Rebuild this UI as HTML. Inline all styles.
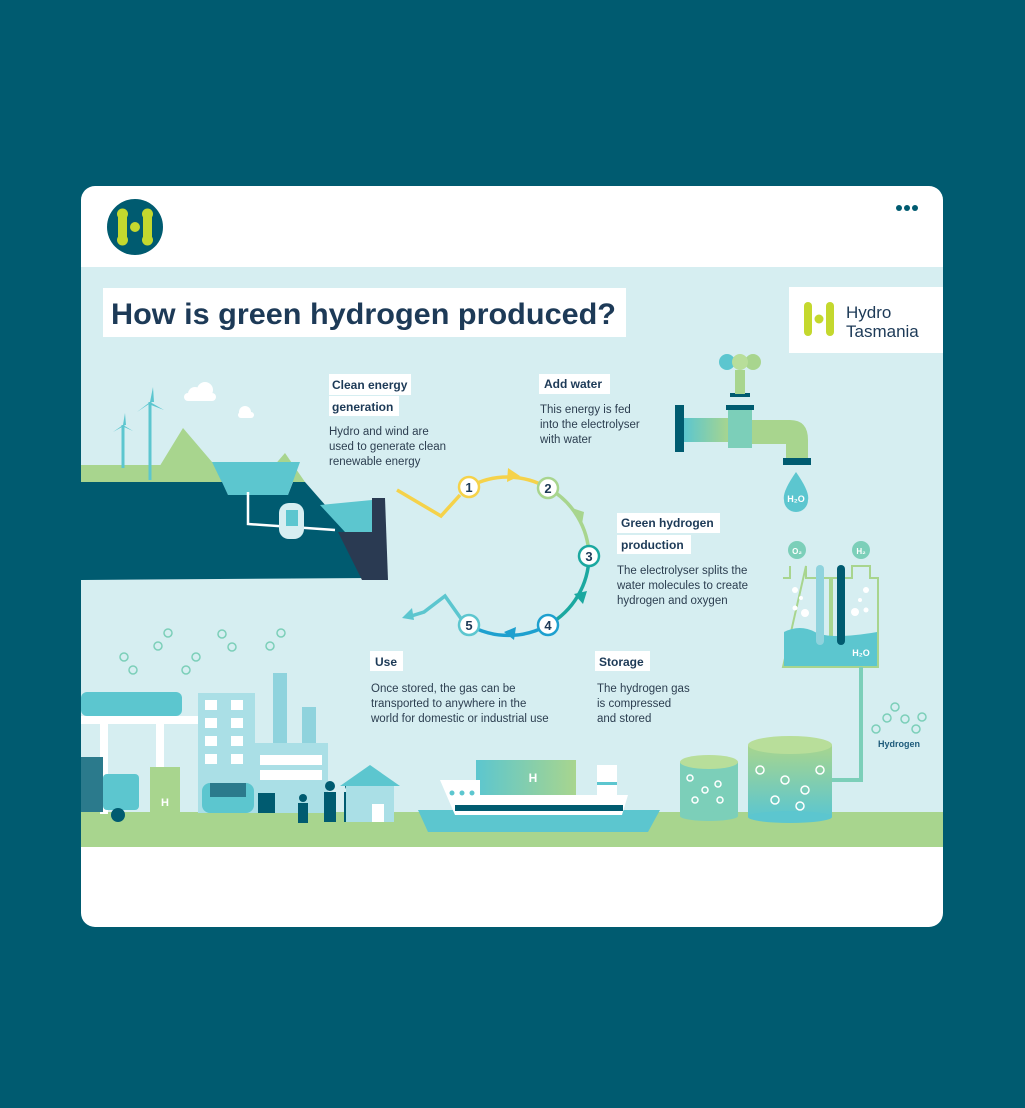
<!DOCTYPE html>
<html><head><meta charset="utf-8"><style>
*{margin:0;padding:0}
body{width:1025px;height:1108px;background:#005b70;position:relative;overflow:hidden;font-family:"Liberation Sans",sans-serif}
.card{position:absolute;left:81px;top:186px;width:862px;height:741px;background:#fff;border-radius:14px;overflow:hidden}
svg{position:absolute;left:0;top:0}
</style></head><body>
<div class="card"></div>
<svg width="1025" height="1108" viewBox="0 0 1025 1108">
<defs>
<linearGradient id="tg" x1="0" x2="1"><stop offset="0" stop-color="#5cc6cf"/><stop offset="1" stop-color="#a8d58e"/></linearGradient>
<linearGradient id="tv" x1="0" y1="0" x2="0" y2="1"><stop offset="0" stop-color="#a8d58e"/><stop offset="1" stop-color="#5cc6cf"/></linearGradient>
<clipPath id="cc"><rect x="81" y="186" width="862" height="741" rx="14"/></clipPath>
</defs>
<g clip-path="url(#cc)">
<rect x="81" y="267" width="862" height="580" fill="#d6eef1"/>
<!-- header logo -->
<circle cx="135" cy="227" r="28" fill="#005b70"/>
<g fill="#c4d82e">
<rect x="118" y="210" width="9" height="34" rx="4.5"/><rect x="143" y="210" width="9" height="34" rx="4.5"/>
<circle cx="122.5" cy="214" r="5.5"/><circle cx="147.5" cy="214" r="5.5"/><circle cx="122.5" cy="240" r="5.5"/><circle cx="147.5" cy="240" r="5.5"/>
<circle cx="135" cy="227" r="5"/></g>
<g fill="#005b70"><circle cx="899" cy="208" r="3"/><circle cx="907" cy="208" r="3"/><circle cx="915" cy="208" r="3"/></g>
<!-- title -->
<rect x="103" y="288" width="523" height="49" fill="#fff"/>
<text x="111" y="324" font-size="30" font-weight="bold" fill="#1d3a57" textLength="505" lengthAdjust="spacingAndGlyphs">How is green hydrogen produced?</text>
<rect x="789" y="287" width="154" height="66" fill="#fff"/>
<g fill="#c4d82e"><rect x="804" y="302" width="8" height="34" rx="4"/><rect x="826" y="302" width="8" height="34" rx="4"/><circle cx="819" cy="319" r="4.5"/></g>
<text x="846" y="318" font-size="17" fill="#1d3a57">Hydro</text>
<text x="846" y="337" font-size="17" fill="#1d3a57">Tasmania</text>
<!-- left landscape -->
<rect x="81" y="465" width="160" height="17" fill="#a8d58e"/>
<path d="M150 482 L183 428 L212 462 L230 482Z" fill="#a8d58e"/>
<path d="M260 482 L285 453 L305 482Z" fill="#a8d58e"/>
<path d="M212 462 L300 462 L288 495 L228 495Z" fill="#5cc6cf"/>
<path d="M81 482 L222 482 L228 495 L288 495 L293 482 L305 482 L340 522 L372 500 L372 578 L81 580Z" fill="#005b70"/>
<path d="M320 505 L372 500 L372 532 L345 532Z" fill="#5cc6cf"/>
<path d="M338 532 L372 532 L372 580 L362 580Z" fill="#2a3a52"/>
<path d="M372 498 L385 498 L388 580 L372 580Z" fill="#2a3a52"/>
<path d="M248 492 L248 524 L335 530" stroke="#fff" stroke-width="2.5" fill="none"/>
<rect x="279" y="503" width="25" height="36" rx="10" fill="#d6eef1"/>
<rect x="286" y="510" width="12" height="16" fill="#5cc6cf"/>
<g stroke="#5cc6cf" stroke-width="3" fill="none"><line x1="123" y1="468" x2="123" y2="425"/><line x1="150" y1="480" x2="150" y2="402"/></g>
<g fill="#5cc6cf"><path d="M150 402 l3 -15 l1 15z"/><path d="M150 402 l-13 10 l12 -8z"/><path d="M150 402 l14 8 l-13 -5z"/><path d="M123 425 l2 -12 l1 12z"/><path d="M123 425 l-10 7 l9 -5z"/><path d="M123 425 l10 6 l-9 -4z"/></g>
<g fill="#fff"><circle cx="195" cy="394" r="7"/><circle cx="205" cy="390" r="8"/><rect x="184" y="393" width="32" height="8" rx="4"/><circle cx="245" cy="412" r="6"/><rect x="238" y="412" width="16" height="6" rx="3"/></g>
<!-- labels -->
<g font-size="12" fill="#1d3a57" font-weight="bold">
<rect x="329" y="374" width="82" height="21" fill="#fff"/><text x="332" y="389">Clean energy</text>
<rect x="329" y="396" width="70" height="20" fill="#fff"/><text x="332" y="411">generation</text>
<rect x="539" y="374" width="71" height="20" fill="#fff"/><text x="544" y="388">Add water</text>
<rect x="617" y="513" width="103" height="20" fill="#fff"/><text x="621" y="527">Green hydrogen</text>
<rect x="617" y="535" width="74" height="19" fill="#fff"/><text x="621" y="549">production</text>
<rect x="370" y="651" width="33" height="20" fill="#fff"/><text x="375" y="666">Use</text>
<rect x="595" y="651" width="55" height="20" fill="#fff"/><text x="599" y="666">Storage</text>
</g>
<g font-size="11.5" fill="#2c3e50">
<text x="329" y="435">Hydro and wind are</text><text x="329" y="450">used to generate clean</text><text x="329" y="465">renewable energy</text>
<text x="540" y="413">This energy is fed</text><text x="540" y="428">into the electrolyser</text><text x="540" y="443">with water</text>
<text x="617" y="574">The electrolyser splits the</text><text x="617" y="589">water molecules to create</text><text x="617" y="604">hydrogen and oxygen</text>
<text x="371" y="692">Once stored, the gas can be</text><text x="371" y="707">transported to anywhere in the</text><text x="371" y="722">world for domestic or industrial use</text>
<text x="597" y="692">The hydrogen gas</text><text x="597" y="707">is compressed</text><text x="597" y="722">and stored</text>
</g>
<!-- cycle -->
<path d="M397 490 L441 516 L460 495" stroke="#f5d24a" stroke-width="3.5" fill="none"/>
<path d="M469 487 A80 80 0 0 1 548 488" stroke="#f5d24a" stroke-width="3.5" fill="none"/>
<path d="M508 468 l12 8 l-13 6z" fill="#f5d24a"/>
<path d="M548 488 A80 80 0 0 1 589 556" stroke="#a8d58e" stroke-width="3.5" fill="none"/>
<path d="M572 508 l12 4 l-2 12z" fill="#a8d58e"/>
<path d="M589 556 A80 80 0 0 1 548 625" stroke="#1ba8a0" stroke-width="3.5" fill="none"/>
<path d="M574 594 l13 -3 l-4 13z" fill="#1ba8a0"/>
<path d="M548 625 A80 80 0 0 1 469 625" stroke="#1ea0cf" stroke-width="3.5" fill="none"/>
<path d="M516 627 l-12 5 l10 8z" fill="#1ea0cf"/>
<path d="M462 620 L445 596 L424 612 L408 617" stroke="#5cc6cf" stroke-width="3.5" fill="none"/>
<path d="M402 618 l10 -10 l2 12z" fill="#5cc6cf"/>
<g font-size="13" font-weight="bold" fill="#1d3a57" text-anchor="middle" stroke-width="2.5">
<circle cx="469" cy="487" r="10" fill="#fff" stroke="#f5d24a"/><text x="469" y="492">1</text>
<circle cx="548" cy="488" r="10" fill="#fff" stroke="#a8d58e"/><text x="548" y="493">2</text>
<circle cx="589" cy="556" r="10" fill="#fff" stroke="#1ba8a0"/><text x="589" y="561">3</text>
<circle cx="548" cy="625" r="10" fill="#fff" stroke="#1ea0cf"/><text x="548" y="630">4</text>
<circle cx="469" cy="625" r="10" fill="#fff" stroke="#5cc6cf"/><text x="469" y="630">5</text>
</g>
<!-- faucet -->
<rect x="675" y="405" width="9" height="47" fill="#005b70"/>
<rect x="684" y="418" width="45" height="24" fill="url(#tg)"/>
<rect x="728" y="408" width="24" height="40" fill="#7ccfb9"/>
<rect x="726" y="405" width="28" height="5" fill="#005b70"/>
<rect x="730" y="393" width="20" height="4" fill="#005b70"/>
<rect x="735" y="370" width="10" height="24" fill="#a8d58e"/>
<circle cx="727" cy="362" r="8" fill="#5cc6cf"/><circle cx="753" cy="362" r="8" fill="#a8d58e"/><circle cx="740" cy="362" r="8" fill="#b8de9a"/>
<path d="M752 420 L790 420 Q808 420 808 440 L808 458 L786 458 L786 444 L752 444Z" fill="#a8d58e"/>
<rect x="783" y="458" width="28" height="7" fill="#005b70"/>
<path d="M796 472 Q810 492 808 500 A12 12 0 0 1 784 500 Q782 492 796 472Z" fill="#5cc6cf"/>
<text x="796" y="502" font-size="9" font-weight="bold" fill="#fff" text-anchor="middle">H₂O</text>
<!-- electrolyser -->
<circle cx="797" cy="550" r="9" fill="#7ccfb9"/><text x="797" y="554" font-size="8" fill="#fff" text-anchor="middle" font-weight="bold">O₂</text>
<circle cx="861" cy="550" r="9" fill="#7ccfb9"/><text x="861" y="554" font-size="8" fill="#fff" text-anchor="middle" font-weight="bold">H₂</text>
<path d="M783 578 L790 578 L790 566 M806 566 L806 578 L830 578 L830 667 L783 667Z" stroke="#a8d58e" stroke-width="2" fill="none"/>
<path d="M832 578 L852 578 L852 566 L870 566 L870 578 L878 578 L878 667 L832 667Z" stroke="#a8d58e" stroke-width="2" fill="none"/>
<path d="M784 632 Q800 624 815 632 T877 632 L877 666 L784 666Z" fill="#5cc6cf"/>
<rect x="816" y="565" width="8" height="80" rx="4" fill="#8fd3dd"/>
<rect x="837" y="565" width="8" height="80" rx="4" fill="#005b70"/>
<g fill="#fff"><circle cx="795" cy="590" r="3"/><circle cx="801" cy="598" r="2"/><circle cx="795" cy="608" r="2.5"/><circle cx="805" cy="613" r="4"/><circle cx="866" cy="590" r="3"/><circle cx="860" cy="600" r="2"/><circle cx="855" cy="612" r="4"/><circle cx="866" cy="610" r="2.5"/></g>
<text x="861" y="656" font-size="9" fill="#fff" text-anchor="middle" font-weight="bold">H₂O</text>
<path d="M861 667 L861 780 L832 780" stroke="#7ccfb9" stroke-width="4" fill="none"/>
<g stroke="#7ccfb9" stroke-width="1.5" fill="none"><circle cx="876" cy="729" r="4"/><circle cx="895" cy="707" r="4"/><circle cx="905" cy="719" r="4"/><circle cx="922" cy="717" r="4"/><circle cx="916" cy="729" r="4"/><circle cx="887" cy="718" r="4"/></g>
<text x="878" y="747" font-size="9" font-weight="bold" fill="#1d5a7a">Hydrogen</text>
<!-- molecules left -->
<g stroke="#7ccfb9" stroke-width="1.5" fill="none">
<circle cx="124" cy="657" r="4"/><circle cx="133" cy="670" r="4"/>
<circle cx="158" cy="646" r="4"/><circle cx="168" cy="633" r="4"/>
<circle cx="222" cy="634" r="4"/><circle cx="232" cy="647" r="4"/>
<circle cx="270" cy="646" r="4"/><circle cx="281" cy="633" r="4"/>
<circle cx="186" cy="670" r="4"/><circle cx="196" cy="657" r="4"/>
</g>
<!-- ground -->
<rect x="81" y="812" width="862" height="35" fill="#a8d58e"/>
<!-- city -->
<rect x="81" y="692" width="101" height="24" rx="6" fill="#5cc6cf"/>
<rect x="81" y="716" width="118" height="8" fill="#fff"/>
<rect x="100" y="724" width="8" height="90" fill="#fff"/><rect x="156" y="724" width="8" height="90" fill="#fff"/>
<rect x="198" y="693" width="57" height="120" fill="#aadfe6"/>
<g fill="#fff"><rect x="205" y="700" width="12" height="10"/><rect x="231" y="700" width="12" height="10"/><rect x="205" y="718" width="12" height="10"/><rect x="231" y="718" width="12" height="10"/><rect x="205" y="736" width="12" height="10"/><rect x="231" y="736" width="12" height="10"/><rect x="205" y="754" width="12" height="10"/><rect x="231" y="754" width="12" height="10"/></g>
<rect x="273" y="673" width="14" height="80" fill="#8fd3dd"/><rect x="302" y="707" width="14" height="50" fill="#8fd3dd"/>
<rect x="255" y="743" width="73" height="70" fill="#aadfe6"/>
<rect x="260" y="755" width="62" height="10" fill="#fff"/><rect x="260" y="770" width="62" height="10" fill="#fff"/>
<rect x="81" y="757" width="22" height="55" fill="#2b7a8c"/>
<rect x="103" y="774" width="36" height="36" rx="4" fill="#5cc6cf"/>
<circle cx="118" cy="815" r="7" fill="#005b70"/>
<rect x="150" y="767" width="30" height="52" fill="#a8d58e"/><text x="165" y="806" font-size="11" fill="#fff" text-anchor="middle" font-weight="bold">H</text>
<rect x="202" y="783" width="52" height="30" rx="8" fill="#5cc6cf"/><rect x="210" y="783" width="36" height="14" fill="#2b7a8c"/>
<rect x="258" y="793" width="17" height="20" fill="#005b70"/>
<g fill="#005b70"><circle cx="303" cy="798" r="4"/><rect x="298" y="803" width="10" height="20"/><circle cx="330" cy="786" r="5"/><rect x="324" y="792" width="12" height="30"/><circle cx="350" cy="786" r="5"/><rect x="344" y="792" width="12" height="30"/></g>
<path d="M340 786 L370 765 L400 786Z" fill="#5cc6cf"/><rect x="346" y="786" width="48" height="36" fill="#aadfe6"/><rect x="372" y="804" width="12" height="18" fill="#fff"/>
<!-- ship -->
<path d="M418 810 L660 810 L648 832 L428 832Z" fill="#5cc6cf"/>
<rect x="476" y="760" width="100" height="35" fill="url(#tg)"/>
<text x="533" y="782" font-size="12" fill="#fff" font-weight="bold" text-anchor="middle">H</text>
<path d="M440 780 L480 780 L480 795 L628 795 L622 815 L455 815Z" fill="#fff"/>
<rect x="455" y="805" width="168" height="6" fill="#005b70"/>
<g fill="#5cc6cf"><circle cx="452" cy="793" r="2.5"/><circle cx="462" cy="793" r="2.5"/><circle cx="472" cy="793" r="2.5"/></g>
<rect x="597" y="765" width="20" height="30" fill="#fff"/><rect x="597" y="782" width="20" height="3" fill="#5cc6cf"/>
<!-- tanks -->
<rect x="680" y="762" width="58" height="54" fill="#7ccfb9"/><ellipse cx="709" cy="816" rx="29" ry="5" fill="#7ccfb9"/><ellipse cx="709" cy="762" rx="29" ry="7" fill="#b8de9a"/>
<rect x="748" y="745" width="84" height="72" fill="url(#tv)"/><ellipse cx="790" cy="817" rx="42" ry="6" fill="#5cc6cf"/><ellipse cx="790" cy="745" rx="42" ry="9" fill="#b8de9a"/>
<g stroke="#fff" stroke-width="1.5" fill="none"><circle cx="690" cy="778" r="3"/><circle cx="705" cy="790" r="3"/><circle cx="718" cy="784" r="3"/><circle cx="695" cy="800" r="3"/><circle cx="720" cy="800" r="3"/><circle cx="760" cy="770" r="4"/><circle cx="785" cy="780" r="4"/><circle cx="805" cy="790" r="4"/><circle cx="820" cy="770" r="4"/><circle cx="775" cy="800" r="4"/><circle cx="800" cy="806" r="4"/></g>
</g>
</svg>
</body></html>
